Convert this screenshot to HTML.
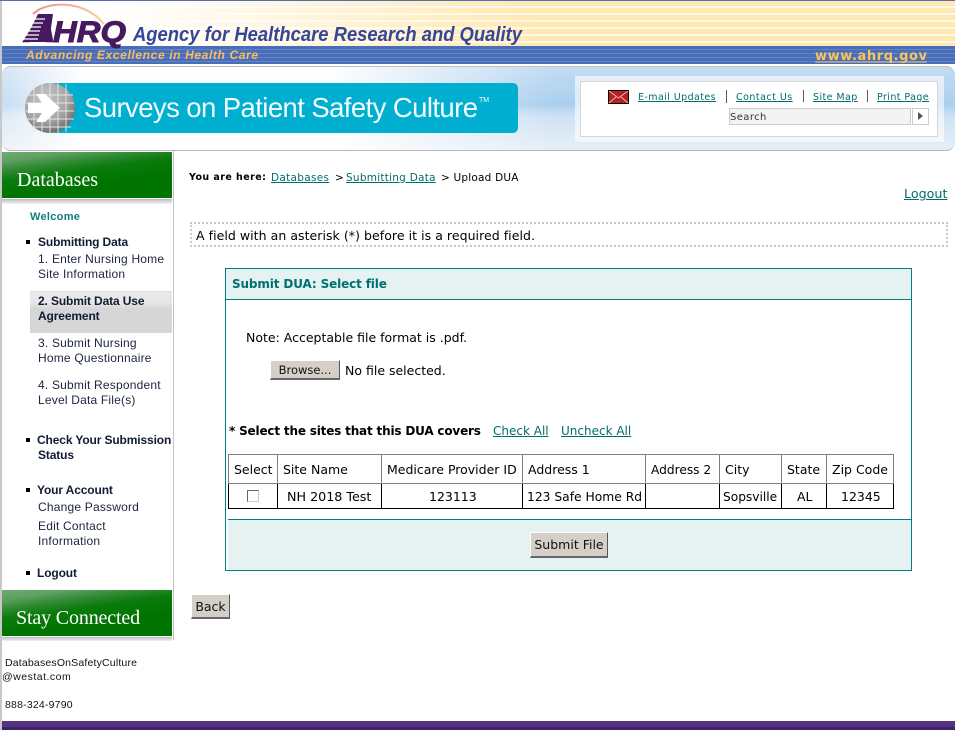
<!DOCTYPE html>
<html lang="en"><head><meta charset="utf-8"><title>Upload DUA</title>
<style>
html,body{margin:0;padding:0;background:#fff}
#p{position:relative;width:955px;height:730px;overflow:hidden;background:#fff;font-family:"DejaVu Sans",sans-serif;color:#000}
#p div,#p span.t,#p a.t{position:absolute}
.t{white-space:nowrap;line-height:16px;height:16px}
a{color:#006d6d;text-decoration:underline}
.v{font-size:12.5px}
.s{font-family:"Liberation Sans",sans-serif;font-size:12px;color:#1c2440;letter-spacing:.2px}
.s.b{letter-spacing:-.13px}
.b{font-weight:bold}
.btn{background:#d4d0c8;border-top:1px solid #fff;border-left:1px solid #fff;border-right:1px solid #555;border-bottom:2px solid #666;box-sizing:border-box;text-align:center;font-size:12.5px;line-height:24px;color:#111;white-space:nowrap}
.g{background:linear-gradient(172deg,#6eab71 0,#5fa062 14%,#2f8a32 28%,#0a7b0c 42%,#007400 65%,#007500 100%)}
.sh{background:linear-gradient(#bdbdbd,#f2f2f2)}
.hl{background:#808080}
.bk{background:#000}
</style></head><body>
<div id="p">
<div style="left:0;top:0;width:2px;height:730px;background:#c8c8c8"></div>
<div style="left:0;top:0;width:955px;height:1px;background:#5a6cb0"></div>
<div style="left:2px;top:1px;width:953px;height:45px;background:repeating-linear-gradient(#ffe9b2 0,#ffe9b2 5px,#fff8e6 5px,#fff8e6 7px)"></div>
<div style="left:2px;top:1px;width:953px;height:45px;background:linear-gradient(90deg,#fff 0,#fff 100px,rgba(255,255,255,.85) 170px,rgba(255,255,255,0) 540px)"></div>
<div style="left:2px;top:46px;width:953px;height:18px;background:repeating-linear-gradient(#4a6db8 0,#4a6db8 3px,#6084c8 3px,#6084c8 4px)"></div>

<svg style="position:absolute;left:0;top:0" width="955" height="66" xmlns="http://www.w3.org/2000/svg">
<defs><linearGradient id="arc" x1="0" x2="1" y1="0" y2="0"><stop offset="0" stop-color="#e88f8f"/><stop offset=".6" stop-color="#eeb6a0"/><stop offset="1" stop-color="#f2d39a"/></linearGradient></defs>
<path d="M33 14C46 1 84 -1 104 24" fill="none" stroke="url(#arc)" stroke-width="2"/>
<text x="24" y="42" font-family="Liberation Sans" font-weight="bold" font-style="italic" font-size="39" fill="#47195f" stroke="#47195f" stroke-width="1" textLength="32" lengthAdjust="spacingAndGlyphs">A</text>
<text x="53" y="42" font-family="Liberation Sans" font-weight="bold" font-style="italic" font-size="30" fill="#47195f" stroke="#47195f" stroke-width="1" textLength="73" lengthAdjust="spacingAndGlyphs">HRQ</text>
<path d="M38 14h15l-4 28H24z" fill="#47195f"/>
<path d="M30 19h15M28 23h15M26 27h15M24 31h16M22 35h17M20 39h18" stroke="#fff" stroke-width="1.2"/>
<text x="133" y="41" font-family="Liberation Sans" font-weight="bold" font-style="italic" font-size="20" fill="#36459a" textLength="389" lengthAdjust="spacingAndGlyphs">Agency for Healthcare Research and Quality</text>
<text x="26" y="59" font-family="Liberation Sans" font-weight="bold" font-style="italic" font-size="12" fill="#f9bd5b" textLength="232" lengthAdjust="spacing">Advancing Excellence in Health Care</text>
<text x="815" y="60" font-family="DejaVu Sans" font-weight="bold" font-size="13" fill="#f9c65b" textLength="112">www.ahrq.gov</text>
<path d="M815 62h112" stroke="#f9c65b"/>
</svg>

<div style="left:2px;top:66px;width:953px;height:85px;box-sizing:border-box;border-top:1px solid #c0c0c0;border-bottom:1px solid #b8b8b8;border-radius:9px;background:linear-gradient(90deg,rgba(255,255,255,.3) 0,rgba(255,255,255,.95) 8%,rgba(255,255,255,.95) 35%,rgba(255,255,255,0) 58%),linear-gradient(#c4dcf2 0,#a9cfee 45%,#cfe2f4 60%,#e6eff8 100%)"></div>

<svg style="position:absolute;left:0;top:75px" width="530" height="65" xmlns="http://www.w3.org/2000/svg">
<defs><radialGradient id="gl" cx=".4" cy=".3" r=".85"><stop offset="0" stop-color="#c4c4c4"/><stop offset=".55" stop-color="#a4a4a4"/><stop offset="1" stop-color="#4f4f4f"/></radialGradient></defs>
<rect x="50" y="8" width="468" height="50" rx="5" fill="#00aecf"/>
<circle cx="50" cy="33" r="25" fill="url(#gl)"/>
<path d="M34 9v48M42 8v50M50 8v50M58 8v50M66 9v48M27 20h46M26 28h48M26 36h48M26 44h48M29 52h42" stroke="#e6e6e6" stroke-width=".9" fill="none"/>
<path d="M28 28h14l-6-9h9l15 14-15 14h-9l6-9H28z" fill="#fff"/>
<text x="84" y="42" font-family="Liberation Sans" font-size="27.5" fill="#fff" fill-opacity=".95" textLength="394" lengthAdjust="spacing">Surveys on Patient Safety Culture</text>
<text x="479" y="27" font-family="Liberation Sans" font-size="7" fill="#fff">TM</text>
</svg>

<div style="left:575px;top:76px;width:369px;height:66px;background:rgba(255,255,255,.6)"></div>
<div style="left:580px;top:81px;width:358px;height:56px;box-sizing:border-box;background:#fff;border:1px solid #d5d5d5"></div>
<svg style="position:absolute;left:608px;top:90px" width="21" height="14" xmlns="http://www.w3.org/2000/svg"><rect x=".5" y=".5" width="20" height="13" fill="#b52020" stroke="#000"/><path d="M1 1l9.5 7L20 1M1 13l7-6M20 13l-7-6" stroke="#f0b0b0" fill="none"/></svg>
<a class="t" href="#" style="left:638px;top:90px;font-size:9.5px;letter-spacing:.42px">E-mail Updates</a>
<div style="left:726px;top:90px;width:1px;height:13px;background:#556"></div>
<a class="t" href="#" style="left:736px;top:90px;font-size:9.5px;letter-spacing:.48px">Contact Us</a>
<div style="left:803px;top:90px;width:1px;height:12px;background:#556"></div>
<a class="t" href="#" style="left:813px;top:90px;font-size:9.5px;letter-spacing:.42px">Site Map</a>
<div style="left:867px;top:90px;width:1px;height:12px;background:#556"></div>
<a class="t" href="#" style="left:877px;top:90px;font-size:9.5px;letter-spacing:.42px">Print Page</a>
<div style="left:729px;top:108px;width:182px;height:17px;box-sizing:border-box;background:#f3f3f3;border:1px solid #ccc"></div>
<span class="t" style="left:730px;top:110px;font-size:10px;color:#333;letter-spacing:.4px">Search</span>
<div style="left:912px;top:108px;width:17px;height:17px;box-sizing:border-box;background:#fff;border:1px solid #ccc"></div>
<div style="left:918px;top:112px;width:0;height:0;border-left:5px solid #555;border-top:4px solid transparent;border-bottom:4px solid transparent"></div>

<!-- sidebar -->
<div style="left:173px;top:151px;width:1px;height:489px;background:#c4c4c4"></div>
<div class="g" style="left:2px;top:152px;width:170px;height:46px"></div>
<div class="sh" style="left:2px;top:199px;width:170px;height:5px"></div>
<span class="t" style="left:17px;top:170px;height:20px;font:20px/20px 'Liberation Serif',serif;color:#fff">Databases</span>
<span class="t s b" style="left:30px;top:209px;font-size:11px;color:#0f7f7f;letter-spacing:.3px">Welcome</span>
<div style="left:26px;top:240px;width:4px;height:4px;background:#000"></div>
<span class="t s b" style="left:38px;top:234px;color:#111b33">Submitting Data</span>
<span class="t s" style="left:38px;top:251px">1. Enter Nursing Home</span>
<span class="t s" style="left:38px;top:266px">Site Information</span>
<div style="left:30px;top:291px;width:142px;height:42px;background:linear-gradient(#d8d8d8 0,#e8e8e8 1px,#e8e8e8 11px,#d6d6d6 18px,#d6d6d6 100%)"></div>
<span class="t s b" style="left:38px;top:293px;color:#111b33">2. Submit Data Use</span>
<span class="t s b" style="left:38px;top:308px;color:#111b33">Agreement</span>
<span class="t s" style="left:38px;top:335px">3. Submit Nursing</span>
<span class="t s" style="left:38px;top:350px">Home Questionnaire</span>
<span class="t s" style="left:38px;top:377px">4. Submit Respondent</span>
<span class="t s" style="left:38px;top:392px">Level Data File(s)</span>
<div style="left:26px;top:438px;width:4px;height:4px;background:#000"></div>
<span class="t s b" style="left:37px;top:432px;color:#111b33">Check Your Submission</span>
<span class="t s b" style="left:38px;top:447px;color:#111b33">Status</span>
<div style="left:26px;top:488px;width:4px;height:4px;background:#000"></div>
<span class="t s b" style="left:37px;top:482px;color:#111b33">Your Account</span>
<span class="t s" style="left:38px;top:499px">Change Password</span>
<span class="t s" style="left:38px;top:518px">Edit Contact</span>
<span class="t s" style="left:38px;top:533px">Information</span>
<div style="left:26px;top:571px;width:4px;height:4px;background:#000"></div>
<span class="t s b" style="left:37px;top:565px;color:#111b33">Logout</span>
<div class="g" style="left:2px;top:590px;width:170px;height:46px"></div>
<div class="sh" style="left:2px;top:637px;width:170px;height:4px"></div>
<span class="t" style="left:16px;top:608px;height:20px;font:20px/20px 'Liberation Serif',serif;color:#fff;letter-spacing:-.15px">Stay Connected</span>
<span class="t" style="left:5px;top:655px;font:10.5px/16px 'Liberation Sans',sans-serif;color:#111;letter-spacing:.18px">DatabasesOnSafetyCulture</span>
<span class="t" style="left:2px;top:669px;font:10.5px/16px 'Liberation Sans',sans-serif;color:#111;letter-spacing:.5px">@westat.com</span>
<span class="t" style="left:5px;top:697px;font:10.5px/16px 'Liberation Sans',sans-serif;color:#111;letter-spacing:.2px">888-324-9790</span>
<div style="left:2px;top:721px;width:953px;height:9px;background:linear-gradient(#57327f 0,#57327f 6px,#3c2468 6px)"></div>

<!-- main -->
<span class="t b" style="left:189px;top:170px;font-size:9.5px;letter-spacing:.45px">You are here:</span>
<a class="t" href="#" style="left:271px;top:170px;font-size:10.5px;letter-spacing:.3px">Databases</a>
<span class="t" style="left:335px;top:170px;font-size:10.5px">&gt;</span>
<a class="t" href="#" style="left:346px;top:170px;font-size:10.5px;letter-spacing:.25px">Submitting Data</a>
<span class="t" style="left:441px;top:170px;font-size:10.5px;letter-spacing:.2px">&gt; Upload DUA</span>
<a class="t" href="#" style="left:904px;top:186px;font-size:12.7px">Logout</a>
<div style="left:190px;top:222px;width:758px;height:25px;box-sizing:border-box;border:2px dotted #c8c8c8"></div>
<span class="t v" style="left:196px;top:228px;letter-spacing:.05px">A field with an asterisk (*) before it is a required field.</span>

<div style="left:225px;top:268px;width:687px;height:303px;box-sizing:border-box;border:1px solid #008080"></div>
<div style="left:226px;top:269px;width:685px;height:30px;background:#e6f2f2"></div>
<div style="left:226px;top:299px;width:685px;height:1px;background:#008080"></div>
<span class="t b" style="left:232px;top:276px;font-size:12px;color:#007070;letter-spacing:-.13px">Submit DUA: Select file</span>
<span class="t v" style="left:246px;top:330px">Note: Acceptable file format is .pdf.</span>
<div class="btn" style="left:270px;top:360px;width:70px;height:20px;line-height:18px;font-size:11.5px">Browse...</div>
<span class="t v" style="left:345px;top:363px">No file selected.</span>
<span class="t b" style="left:229px;top:423px;font-size:12px;letter-spacing:-.18px">* Select the sites that this DUA covers</span>
<a class="t" href="#" style="left:493px;top:423px;font-size:12px">Check All</a>
<a class="t" href="#" style="left:561px;top:423px;font-size:12px">Uncheck All</a>

<!-- table -->
<div class="hl" style="left:228px;top:454px;width:666px;height:1px"></div>
<div class="hl" style="left:228px;top:483px;width:666px;height:1px"></div>
<div class="bk" style="left:228px;top:508px;width:666px;height:1px"></div>
<div class="hl" style="left:228px;top:454px;width:1px;height:29px"></div>
<div class="hl" style="left:277px;top:454px;width:1px;height:29px"></div>
<div class="hl" style="left:381px;top:454px;width:1px;height:29px"></div>
<div class="hl" style="left:522px;top:454px;width:1px;height:29px"></div>
<div class="hl" style="left:645px;top:454px;width:1px;height:29px"></div>
<div class="hl" style="left:719px;top:454px;width:1px;height:29px"></div>
<div class="hl" style="left:781px;top:454px;width:1px;height:29px"></div>
<div class="hl" style="left:826px;top:454px;width:1px;height:29px"></div>
<div class="hl" style="left:893px;top:454px;width:1px;height:29px"></div>
<div class="bk" style="left:228px;top:484px;width:1px;height:25px"></div>
<div class="bk" style="left:277px;top:484px;width:1px;height:25px"></div>
<div class="bk" style="left:381px;top:484px;width:1px;height:25px"></div>
<div class="bk" style="left:522px;top:484px;width:1px;height:25px"></div>
<div class="bk" style="left:645px;top:484px;width:1px;height:25px"></div>
<div class="bk" style="left:719px;top:484px;width:1px;height:25px"></div>
<div class="bk" style="left:781px;top:484px;width:1px;height:25px"></div>
<div class="bk" style="left:826px;top:484px;width:1px;height:25px"></div>
<div class="bk" style="left:893px;top:484px;width:1px;height:25px"></div>
<span class="t v" style="left:234px;top:462px">Select</span>
<span class="t v" style="left:283px;top:462px">Site Name</span>
<span class="t v" style="left:387px;top:462px">Medicare Provider ID</span>
<span class="t v" style="left:528px;top:462px">Address 1</span>
<span class="t v" style="left:651px;top:462px;font-size:12.2px">Address 2</span>
<span class="t v" style="left:725px;top:462px">City</span>
<span class="t v" style="left:787px;top:462px">State</span>
<span class="t v" style="left:832px;top:462px">Zip Code</span>
<div style="left:247px;top:490px;width:12px;height:12px;box-sizing:border-box;background:#fff;border:1px solid;border-color:#666 #ccc #ccc #666"></div>
<span class="t v" style="left:287px;top:489px;font-size:12.7px">NH 2018 Test</span>
<span class="t v" style="left:429px;top:489px">123113</span>
<span class="t v" style="left:527px;top:489px;font-size:12.3px">123 Safe Home Rd</span>
<span class="t v" style="left:723px;top:489px;font-size:12.2px">Sopsville</span>
<span class="t v" style="left:797px;top:489px">AL</span>
<span class="t v" style="left:841px;top:489px">12345</span>

<div style="left:228px;top:519px;width:683px;height:51px;background:#e6f2f2;border-top:1px solid #008080;box-sizing:border-box"></div>
<div class="btn" style="left:530px;top:532px;width:78px;height:26px">Submit File</div>
<div class="btn" style="left:191px;top:594px;width:39px;height:25px;line-height:23px">Back</div>
</div>
</body></html>
